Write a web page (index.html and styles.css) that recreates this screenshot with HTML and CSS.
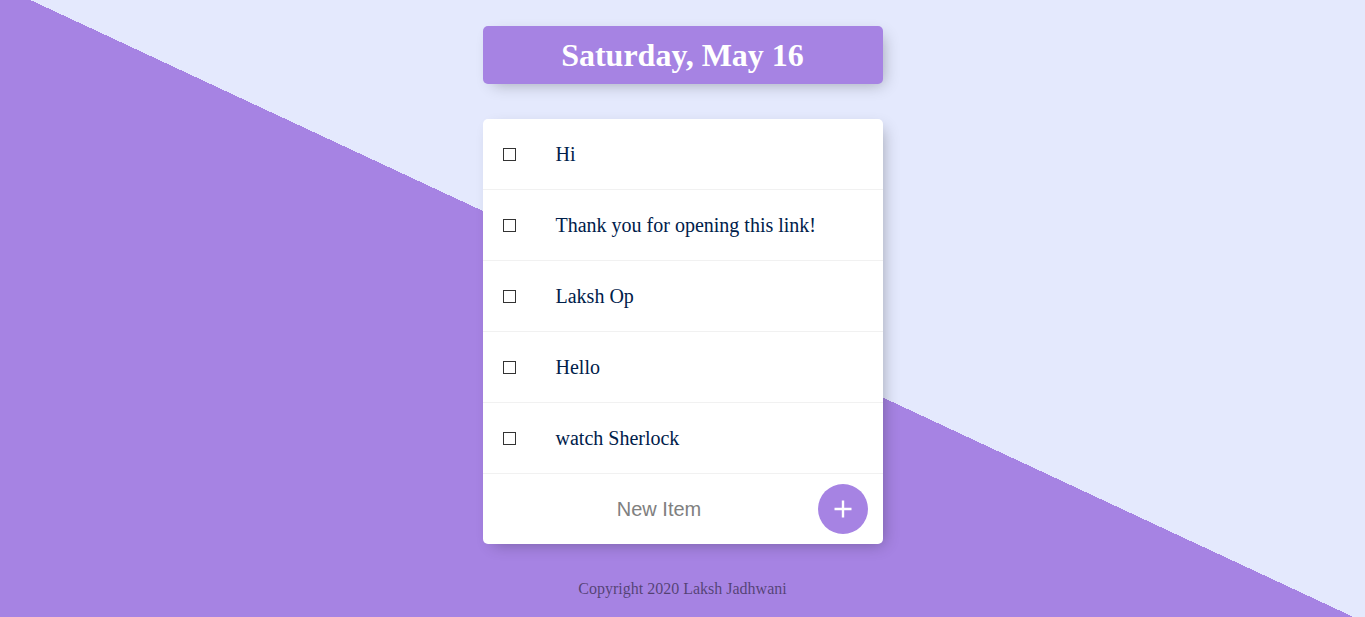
FILE: index.html
```html
<!DOCTYPE html>
<html lang="en">
<head>
<meta charset="utf-8">
<title>To-Do List</title>
<link rel="stylesheet" href="styles.css">
</head>
<body>
  <div class="page">
    <div class="box heading">
      <h1>Saturday, May 16</h1>
    </div>
    <div class="box list">
      <div class="item"><span class="check"></span><p>Hi</p></div>
      <div class="item"><span class="check"></span><p>Thank you for opening this link!</p></div>
      <div class="item"><span class="check"></span><p>Laksh Op</p></div>
      <div class="item"><span class="check"></span><p>Hello</p></div>
      <div class="item"><span class="check"></span><p>watch Sherlock</p></div>
      <form class="item new-item">
        <input type="text" name="newItem" placeholder="New Item" autocomplete="off">
        <button type="button" class="add">
          <svg width="18" height="18" viewBox="0 0 18 18"><path d="M9 0.5v17M0.5 9h17" stroke="#fff" stroke-width="2.4" fill="none"/></svg>
        </button>
      </form>
    </div>
    <footer class="footer">Copyright 2020 Laksh Jadhwani</footer>
  </div>
</body>
</html>
```
FILE: styles.css
```css
html {
  height: 100%;
  background-color: #E4E9FD;
  background-image: linear-gradient(25deg, #A683E3 calc(50% + 4px), #E4E9FD calc(50% + 4px));
  background-repeat: no-repeat;
}

body {
  margin: 0;
  height: 100%;
  font-family: "Liberation Serif", "Times New Roman", serif;
}

.page {
  display: flex;
  flex-direction: column;
  align-items: center;
  gap: 36px;
  padding-top: 26px;
}

.box {
  width: 400px;
  background: #fff;
  border-radius: 5px;
  box-shadow: 5px 5px 15px -5px rgba(0, 0, 0, 0.3);
}

.heading {
  background-color: #A683E3;
  text-align: center;
  margin-bottom: -1px;
}

.heading h1 {
  margin: 0;
  padding: 10px;
  color: #fff;
  font-size: 32px;
  font-weight: bold;
  line-height: 38px;
}

.item {
  min-height: 70px;
  display: flex;
  align-items: center;
  border-bottom: 1px solid #F1F1F1;
}

.item:last-child {
  border-bottom: 0;
}

.check {
  flex: none;
  box-sizing: border-box;
  width: 13px;
  height: 13px;
  margin: 20px;
  border: 1px solid #333;
  background: #fff;
}

.item p {
  margin: 0;
  padding: 20px;
  font-size: 20px;
  color: #00204a;
  line-height: normal;
}

.new-item {
  margin: 0 0 0 20px;
  gap: 2px;
}

.new-item input {
  box-sizing: border-box;
  width: 313px;
  height: 60px;
  padding: 0;
  border: none;
  background: transparent;
  text-align: center;
  font-family: "Liberation Sans", Arial, sans-serif;
  font-size: 20px;
  outline: none;
}

.new-item input::placeholder {
  color: grey;
  opacity: 1;
}

.add {
  flex: none;
  width: 50px;
  height: 50px;
  padding: 0;
  border: 0;
  border-radius: 50%;
  background-color: #A683E3;
  display: flex;
  align-items: center;
  justify-content: center;
}

.add svg {
  display: block;
  margin-top: -1px;
}

.footer {
  color: rgba(0, 0, 0, 0.5);
  font-size: 16px;
  text-align: center;
}
```
